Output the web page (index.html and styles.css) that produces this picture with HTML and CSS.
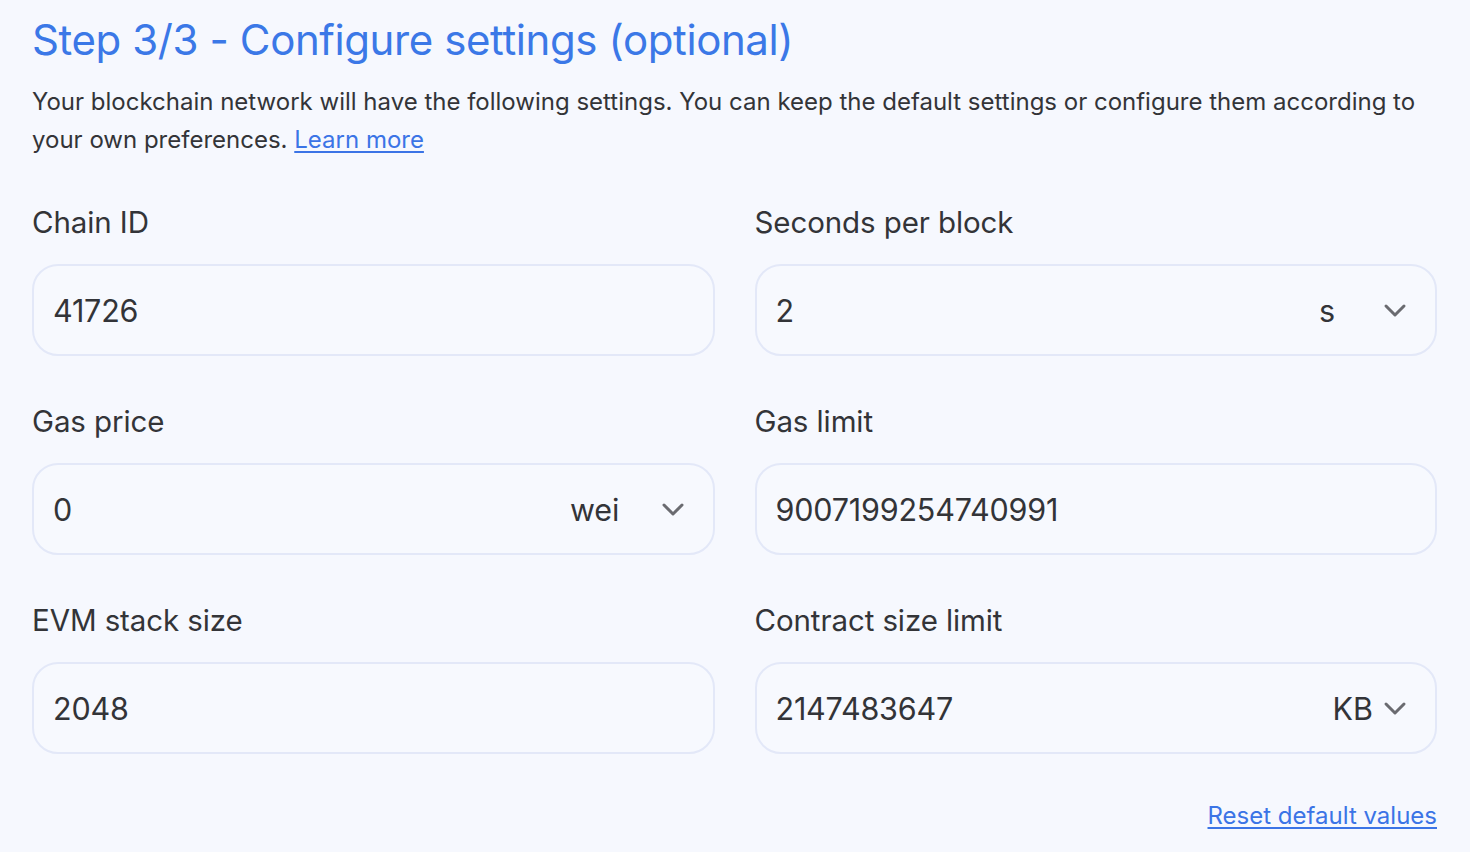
FILE: index.html
```html
<!DOCTYPE html>
<html lang="en">
<head>
<meta charset="utf-8">
<title>Configure settings</title>
<link rel="stylesheet" href="styles.css">
</head>
<body>
<main class="page">
  <h1 class="title">Step 3/3 - Configure settings (optional)</h1>
  <p class="intro">Your blockchain network will have the following settings. You can keep the default settings or configure them according to your own preferences. <a href="#" class="link">Learn more</a></p>

  <div class="grid">
    <div class="field">
      <label class="label">Chain ID</label>
      <div class="input"><span class="value">41726</span></div>
    </div>
    <div class="field">
      <label class="label">Seconds per block</label>
      <div class="input"><span class="value">2</span><span class="unit unit-s">s</span><svg class="chev" viewBox="0 0 24 15" aria-hidden="true"><path d="M3 3l9 9 9-9"/></svg></div>
    </div>
    <div class="field">
      <label class="label">Gas price</label>
      <div class="input"><span class="value">0</span><span class="unit unit-wei">wei</span><svg class="chev" viewBox="0 0 24 15" aria-hidden="true"><path d="M3 3l9 9 9-9"/></svg></div>
    </div>
    <div class="field">
      <label class="label">Gas limit</label>
      <div class="input"><span class="value">9007199254740991</span></div>
    </div>
    <div class="field">
      <label class="label">EVM stack size</label>
      <div class="input"><span class="value">2048</span></div>
    </div>
    <div class="field">
      <label class="label">Contract size limit</label>
      <div class="input"><span class="value">2147483647</span><span class="unit unit-kb">KB</span><svg class="chev" viewBox="0 0 24 15" aria-hidden="true"><path d="M3 3l9 9 9-9"/></svg></div>
    </div>
  </div>

  <div class="footer"><a href="#" class="link reset">Reset default values</a></div>
</main>
</body>
</html>
```

FILE: styles.css
```css
html, body {
  margin: 0;
  padding: 0;
  background: #f6f8fe;
}
body {
  font-family: Inter, "Noto Sans", sans-serif;
  color: #333438;
}
.page {
  width: 1405px;
  padding: 14px 33px 0 32px;
}
.title {
  margin: 0;
  font-weight: 400;
  font-size: 42px;
  line-height: 52px;
  color: #3b78e7;
  letter-spacing: -0.4px;
}
.intro {
  margin: 17px 0 0;
  font-size: 24px;
  line-height: 38px;
  letter-spacing: 0;
}
.link {
  color: #3b74e6;
  text-decoration: underline;
  text-underline-offset: 3px;
  text-decoration-thickness: 1.5px;
}
.grid {
  margin-top: 45px;
  display: grid;
  grid-template-columns: 1fr 1fr;
  column-gap: 40px;
  row-gap: 47px;
}
.field {
  display: flex;
  flex-direction: column;
}
.label {
  font-size: 29.5px;
  line-height: 36px;
  letter-spacing: -0.1px;
  color: #333438;
}
.input {
  margin-top: 24px;
  box-sizing: border-box;
  height: 92px;
  border: 2px solid #e3e8f8;
  border-radius: 26px;
  background: #f7f9fe;
  display: flex;
  align-items: center;
  padding: 0 28px 0 19px;
  font-size: 30.5px;
  color: #333438;
}
.value {
  flex: 1;
  letter-spacing: -0.2px;
}
.unit-s {
  margin-right: 48px;
}
.unit-wei {
  margin-right: 41px;
}
.unit-kb {
  margin-right: 10px;
}
.chev {
  width: 24px;
  height: 15px;
  fill: none;
  stroke: #6a6b70;
  stroke-width: 3;
  stroke-linecap: round;
  stroke-linejoin: round;
}
.footer {
  margin-top: 46px;
  display: flex;
  justify-content: flex-end;
}
.reset {
  font-size: 24px;
  line-height: 32px;
}
```
